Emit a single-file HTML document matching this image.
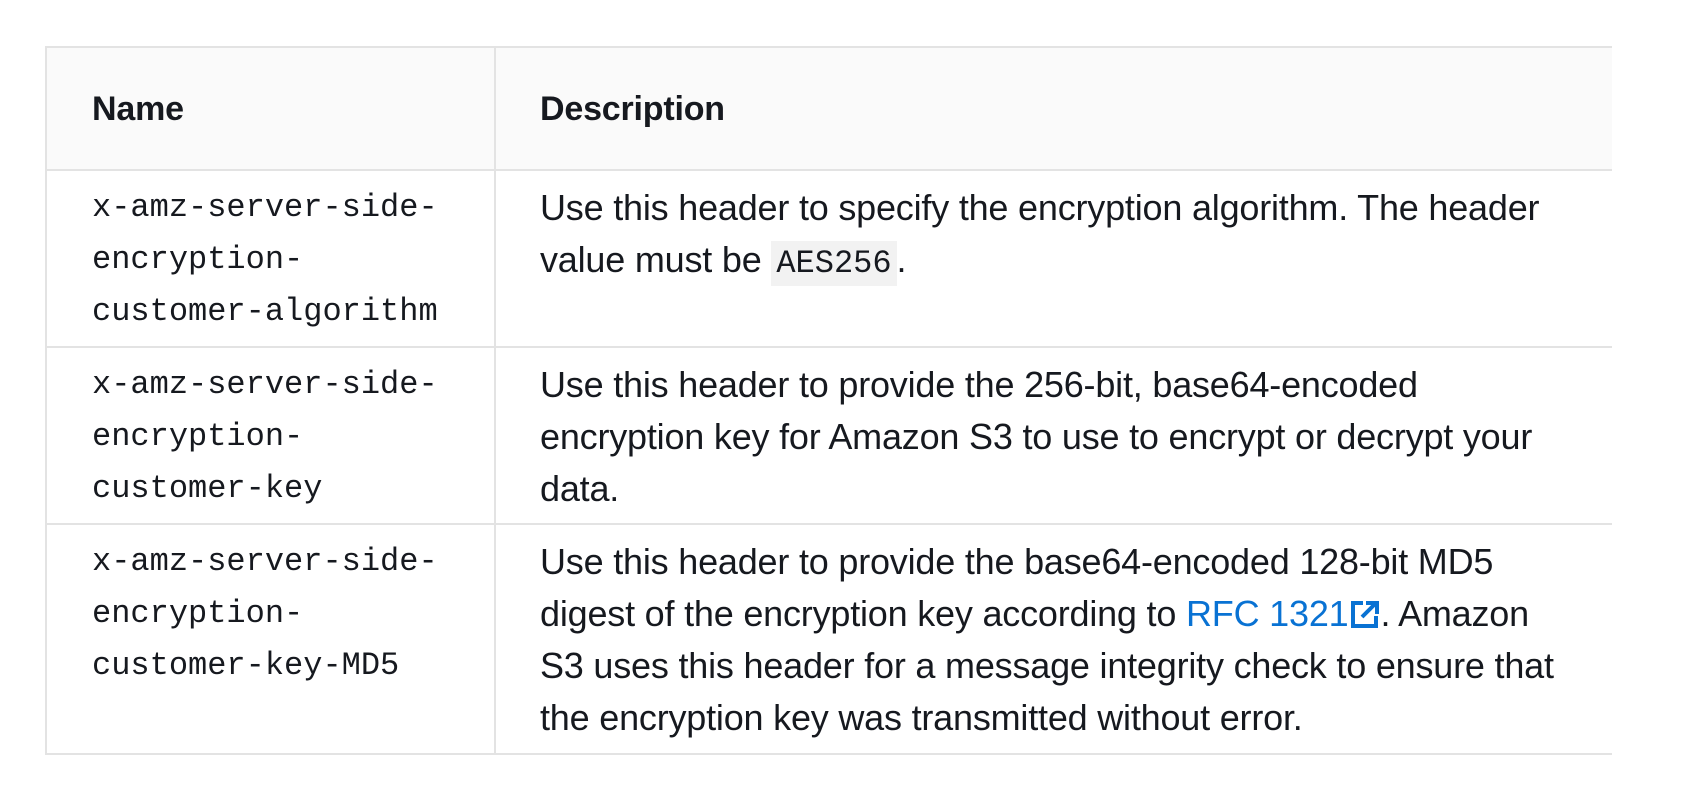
<!DOCTYPE html>
<html><head><meta charset="utf-8"><style>
html,body{margin:0;padding:0;background:#fff;width:1692px;height:789px;overflow:hidden}
table{position:absolute;left:45px;top:46px;width:1567px;border-collapse:collapse;color:#16191f;font-family:"Liberation Sans",sans-serif;font-size:36px;letter-spacing:-0.2px}
td,th{border:2px solid #e3e3e3;vertical-align:top;text-align:left;padding:11px 0 0 0;line-height:52px;white-space:nowrap}
tr>*:last-child{border-right:none}
th{background:#fafafa;height:110px;vertical-align:middle;padding:0;font-weight:bold;font-size:34px}
.c1{width:402px;padding-left:45px}
.c2{padding-left:44px}
td.c1{font-family:"Liberation Mono",monospace;font-size:32px;letter-spacing:0}
code{font-family:"Liberation Mono",monospace;font-size:32px;background:#f2f2f2;padding:4px 5px;letter-spacing:0}
a{color:#0972d3;text-decoration:none}
svg{vertical-align:-3px;margin-left:2px}
</style></head><body>
<table>
<tr style="height:123px"><th class="c1" style="padding-left:45px">Name</th><th class="c2" style="padding-left:44px">Description</th></tr>
<tr style="height:177px"><td class="c1">x-amz-server-side-<br>encryption-<br>customer-algorithm</td><td class="c2">Use this header to specify the encryption algorithm. The header<br>value must be <code>AES256</code>.</td></tr>
<tr style="height:177px"><td class="c1">x-amz-server-side-<br>encryption-<br>customer-key</td><td class="c2">Use this header to provide the 256-bit, base64-encoded<br>encryption key for Amazon S3 to use to encrypt or decrypt your<br>data.</td></tr>
<tr style="height:230px"><td class="c1">x-amz-server-side-<br>encryption-<br>customer-key-MD5</td><td class="c2">Use this header to provide the base64-encoded 128-bit MD5<br>digest of the encryption key according to <a>RFC 1321<svg width="30" height="29" viewBox="0 0 30 29"><path d="M13 3H3v23h23V16" fill="none" stroke="#0972d3" stroke-width="4"/><path d="M12 17L25 4M16 3h11v11" fill="none" stroke="#0972d3" stroke-width="4"/></svg></a>. Amazon<br>S3 uses this header for a message integrity check to ensure that<br>the encryption key was transmitted without error.</td></tr>
</table>
</body></html>
